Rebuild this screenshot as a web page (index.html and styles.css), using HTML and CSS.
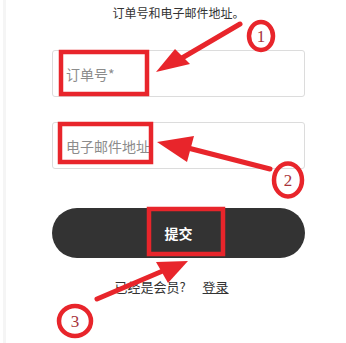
FILE: index.html
```html
<!DOCTYPE html>
<html lang="zh-CN">

<head>
    <meta charset="UTF-8">
    <meta name="viewport" content="width=device-width, initial-scale=1.0">
    <title>订单查询</title>
    <link rel="stylesheet" href="styles.css">
</head>

<body>
    <div class="page">
        <form class="order-form">
            <p class="intro">订单号和电子邮件地址。</p>
            <input class="field" type="text" placeholder="订单号*">
            <input class="field field-email" type="email" placeholder="电子邮件地址">
            <button class="submit" type="button">提交</button>
            <p class="member">已经是会员?<a href="#">登录</a></p>
        </form>

        <!-- annotation layer drawn over the form -->
        <svg class="notes" width="346" height="343" viewBox="0 0 346 343">
            <g fill="none" stroke="#e8252b" stroke-width="4.5">
                <rect x="61" y="52" width="86" height="42" />
                <rect x="60" y="124" width="91" height="38" />
                <rect x="149" y="209" width="74" height="45" />
                <ellipse cx="261" cy="36" rx="12" ry="14" />
                <ellipse cx="288" cy="180" rx="14" ry="16.5" />
                <ellipse cx="75" cy="321" rx="16" ry="15" />
            </g>
            <g stroke="#e8252b" stroke-width="5" stroke-linecap="round">
                <line x1="240" y1="24" x2="182" y2="58" />
                <line x1="270" y1="169" x2="188" y2="148" />
                <line x1="97" y1="299" x2="165" y2="270" />
            </g>
            <g fill="#e8252b">
                <polygon points="156,72 175,49 190,64" />
                <polygon points="157,142 194,136 187,162" />
                <polygon points="188,261 156,262 168,283" />
            </g>
            <g class="num" fill="#a8343a">
                <text x="261" y="42">1</text>
                <text x="288" y="186">2</text>
                <text x="75" y="327">3</text>
            </g>
        </svg>
    </div>
</body>

</html>
```

FILE: styles.css
```css
body {
    margin: 0;
    background: #fff;
    font-family: "Noto Sans CJK SC", "Noto Sans", sans-serif;
    color: #333;
}

.page {
    position: relative;
    width: 346px;
    height: 343px;
    border-left: 3px solid #f5f5f5;
    margin-left: 3px;
    box-sizing: border-box;
    overflow: hidden;
}

.order-form {
    width: 253px;
    margin-left: 46px;
    display: flex;
    flex-direction: column;
}

.intro {
    margin: 4px 0 0;
    text-align: center;
    font-size: 12px;
    line-height: 18px;
}

.field {
    height: 47px;
    margin: 28px 0 0;
    padding: 0 13px;
    border: 1px solid #dcdcdc;
    border-radius: 3px;
    font-family: inherit;
    font-size: 14px;
    box-sizing: border-box;
}

.field::placeholder {
    color: #8c8c8c;
}

.field-email {
    margin-top: 25px;
}

.submit {
    height: 50px;
    margin-top: 39px;
    border: 0;
    border-radius: 25px;
    background: #333;
    color: #fff;
    font-family: inherit;
    font-size: 14px;
    font-weight: bold;
}

.member {
    margin: 20px 0 0;
    text-align: center;
    font-size: 13px;
    line-height: 18px;
    padding-right: 14px;
}

.member a {
    margin-left: 17px;
    color: #333;
}

.notes {
    position: absolute;
    top: 0;
    left: -6px;
    pointer-events: none;
}

.num text {
    font-family: "Liberation Serif", serif;
    font-size: 17px;
    text-anchor: middle;
}
```
